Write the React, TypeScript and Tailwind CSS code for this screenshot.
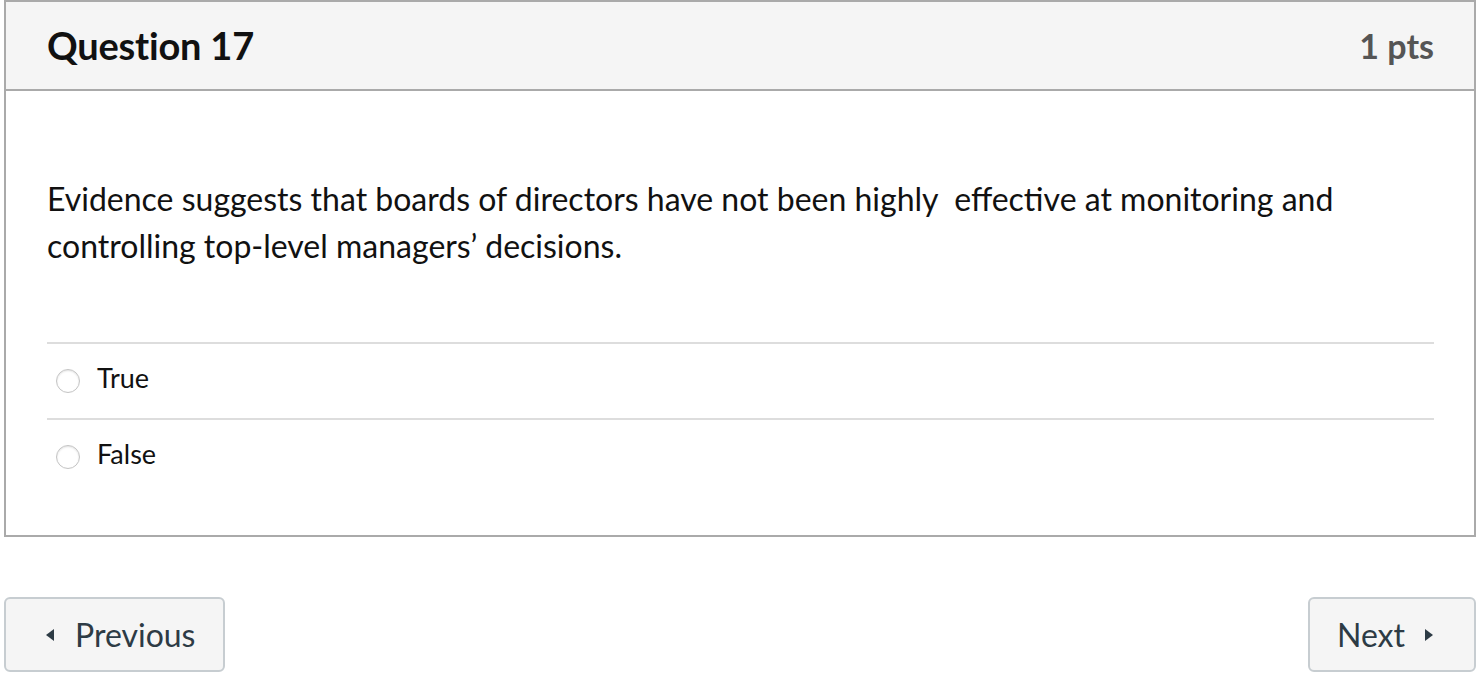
import React from "react";

function Radio() {
  return (
    <span className="inline-block w-[24px] h-[24px] rounded-full border border-[#c4c4c4] bg-white shadow-[inset_0_1px_2px_rgba(0,0,0,0.12)] shrink-0" />
  );
}

export default function App() {
  return (
    <div className="w-[1484px] h-[678px] bg-white font-['Lato','Noto_Sans',sans-serif] relative overflow-hidden">
      <div className="ml-[4px] w-[1472px] border-2 border-[#aaaaaa]">
        <div className="h-[89px] bg-[#f5f5f5] border-b-2 border-[#aaaaaa] flex items-center justify-between pl-[41px] pr-[40px]">
          <div className="text-[38px] font-bold text-[#111111] tracking-[-0.2px]">Question 17</div>
          <div className="text-[34px] font-bold text-[#555555]">1 pts</div>
        </div>
        <div className="px-[41px] pt-[84px] pb-[41px]">
          <p className="text-[32px] leading-[47px] text-[#111111]">
            Evidence suggests that boards of directors have not been highly&nbsp; effective at monitoring and controlling top-level managers’ decisions.
          </p>
          <div className="mt-[73px] w-[1387px]">
            <div className="border-t-2 border-[#dddddd] h-[76px] flex items-center pl-[9px] gap-[17px]">
              <Radio />
              <span className="text-[27px] text-[#111111] leading-[32px] mb-[6px]">True</span>
            </div>
            <div className="border-t-2 border-[#dddddd] h-[76px] flex items-center pl-[9px] gap-[17px]">
              <Radio />
              <span className="text-[27px] text-[#111111] leading-[32px] mb-[6px]">False</span>
            </div>
          </div>
        </div>
      </div>
      <div className="mt-[60px] flex justify-between pl-[4px] pr-[8px]">
        <button className="w-[221px] h-[75px] bg-[#f5f5f5] border-2 border-[#c7cdd1] rounded-[6px] flex items-center justify-start pl-[39px] gap-[21px] text-[32px] text-[#2d3b45]">
          <svg width="9" height="14" viewBox="0 0 9 14"><path d="M9 1 L1 7 L9 13 Z" fill="#2d3b45" /></svg>
          <span>Previous</span>
        </button>
        <button className="w-[168px] h-[75px] bg-[#f5f5f5] border-2 border-[#c7cdd1] rounded-[6px] flex items-center justify-end pr-[40px] gap-[20px] text-[32px] text-[#2d3b45]">
          <span>Next</span>
          <svg width="9" height="14" viewBox="0 0 9 14"><path d="M0 1 L8 7 L0 13 Z" fill="#2d3b45" /></svg>
        </button>
      </div>
    </div>
  );
}
